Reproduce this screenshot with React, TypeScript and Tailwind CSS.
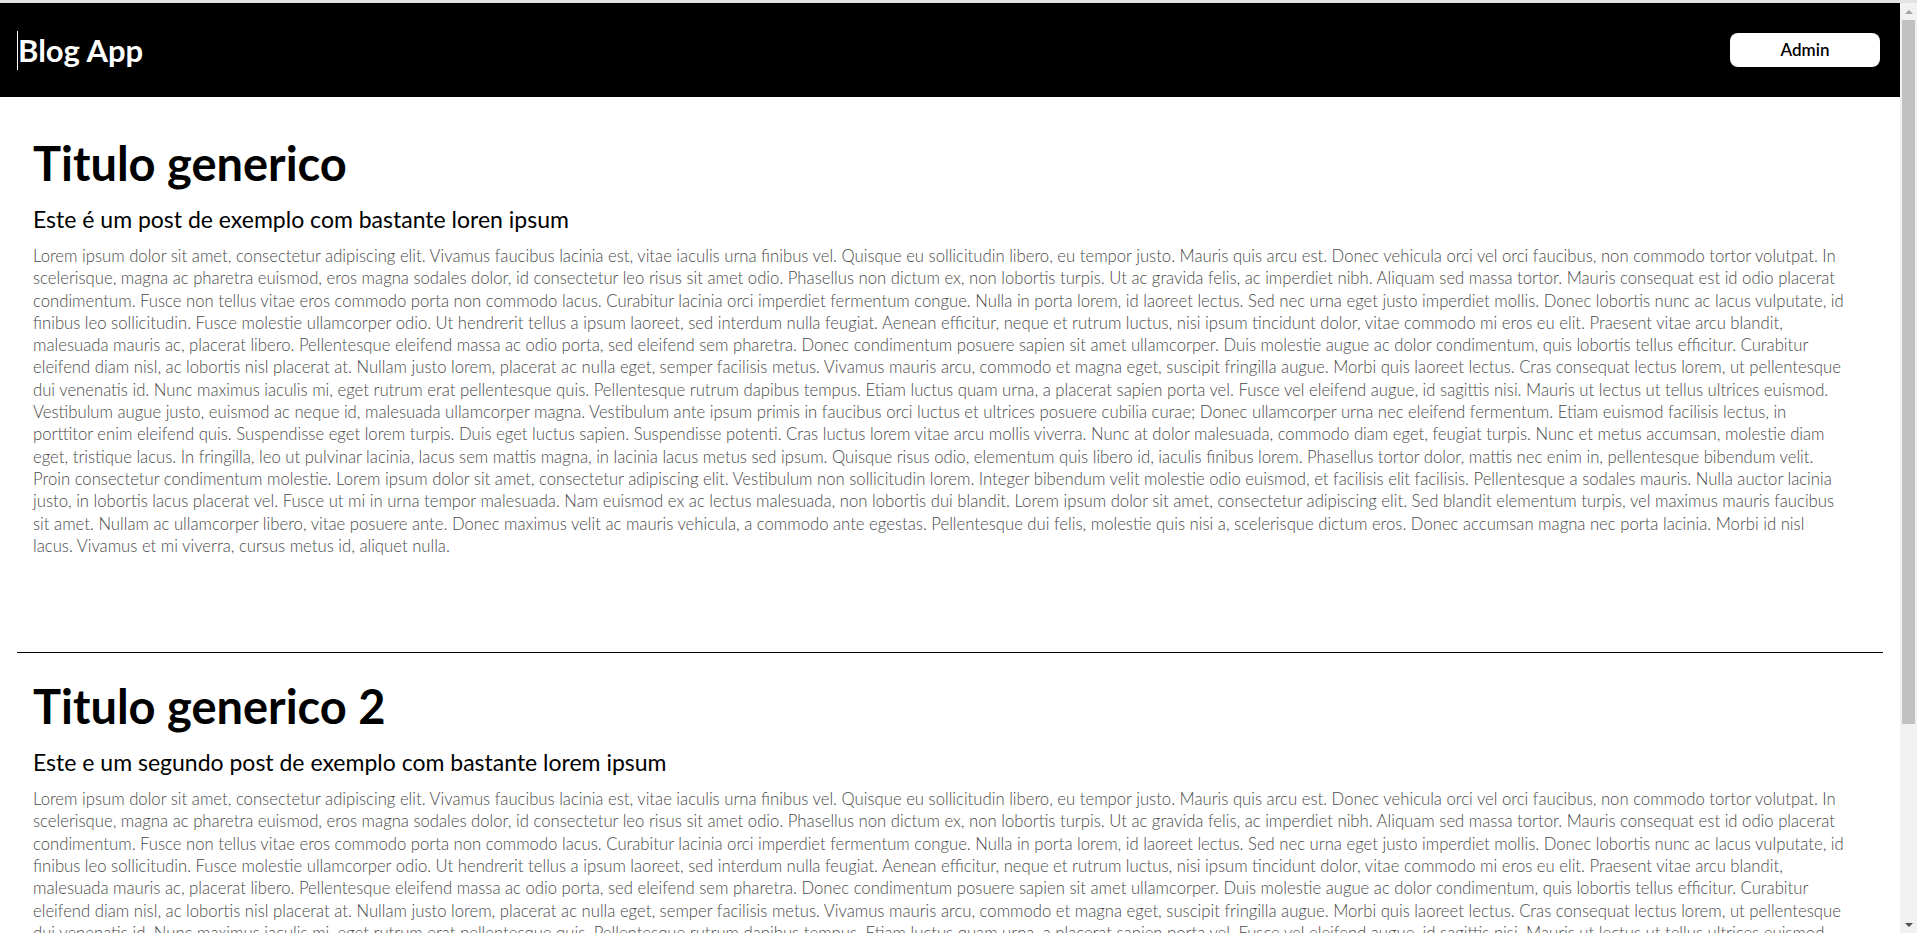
import { Fragment } from 'react';

// line breaks follow the reference render
const lorem = [
  'Lorem ipsum dolor sit amet, consectetur adipiscing elit. Vivamus faucibus lacinia est, vitae iaculis urna finibus vel. Quisque eu sollicitudin libero, eu tempor justo. Mauris quis arcu est. Donec vehicula orci vel orci faucibus, non commodo tortor volutpat. In',
  'scelerisque, magna ac pharetra euismod, eros magna sodales dolor, id consectetur leo risus sit amet odio. Phasellus non dictum ex, non lobortis turpis. Ut ac gravida felis, ac imperdiet nibh. Aliquam sed massa tortor. Mauris consequat est id odio placerat',
  'condimentum. Fusce non tellus vitae eros commodo porta non commodo lacus. Curabitur lacinia orci imperdiet fermentum congue. Nulla in porta lorem, id laoreet lectus. Sed nec urna eget justo imperdiet mollis. Donec lobortis nunc ac lacus vulputate, id',
  'finibus leo sollicitudin. Fusce molestie ullamcorper odio. Ut hendrerit tellus a ipsum laoreet, sed interdum nulla feugiat. Aenean efficitur, neque et rutrum luctus, nisi ipsum tincidunt dolor, vitae commodo mi eros eu elit. Praesent vitae arcu blandit,',
  'malesuada mauris ac, placerat libero. Pellentesque eleifend massa ac odio porta, sed eleifend sem pharetra. Donec condimentum posuere sapien sit amet ullamcorper. Duis molestie augue ac dolor condimentum, quis lobortis tellus efficitur. Curabitur',
  'eleifend diam nisl, ac lobortis nisl placerat at. Nullam justo lorem, placerat ac nulla eget, semper facilisis metus. Vivamus mauris arcu, commodo et magna eget, suscipit fringilla augue. Morbi quis laoreet lectus. Cras consequat lectus lorem, ut pellentesque',
  'dui venenatis id. Nunc maximus iaculis mi, eget rutrum erat pellentesque quis. Pellentesque rutrum dapibus tempus. Etiam luctus quam urna, a placerat sapien porta vel. Fusce vel eleifend augue, id sagittis nisi. Mauris ut lectus ut tellus ultrices euismod.',
  'Vestibulum augue justo, euismod ac neque id, malesuada ullamcorper magna. Vestibulum ante ipsum primis in faucibus orci luctus et ultrices posuere cubilia curae; Donec ullamcorper urna nec eleifend fermentum. Etiam euismod facilisis lectus, in',
  'porttitor enim eleifend quis. Suspendisse eget lorem turpis. Duis eget luctus sapien. Suspendisse potenti. Cras luctus lorem vitae arcu mollis viverra. Nunc at dolor malesuada, commodo diam eget, feugiat turpis. Nunc et metus accumsan, molestie diam',
  'eget, tristique lacus. In fringilla, leo ut pulvinar lacinia, lacus sem mattis magna, in lacinia lacus metus sed ipsum. Quisque risus odio, elementum quis libero id, iaculis finibus lorem. Phasellus tortor dolor, mattis nec enim in, pellentesque bibendum velit.',
  'Proin consectetur condimentum molestie. Lorem ipsum dolor sit amet, consectetur adipiscing elit. Vestibulum non sollicitudin lorem. Integer bibendum velit molestie odio euismod, et facilisis elit facilisis. Pellentesque a sodales mauris. Nulla auctor lacinia',
  'justo, in lobortis lacus placerat vel. Fusce ut mi in urna tempor malesuada. Nam euismod ex ac lectus malesuada, non lobortis dui blandit. Lorem ipsum dolor sit amet, consectetur adipiscing elit. Sed blandit elementum turpis, vel maximus mauris faucibus',
  'sit amet. Nullam ac ullamcorper libero, vitae posuere ante. Donec maximus velit ac mauris vehicula, a commodo ante egestas. Pellentesque dui felis, molestie quis nisi a, scelerisque dictum eros. Donec accumsan magna nec porta lacinia. Morbi id nisl',
  'lacus. Vivamus et mi viverra, cursus metus id, aliquet nulla.',
];

const posts = [
  { title: 'Titulo generico', subtitle: 'Este é um post de exemplo com bastante loren ipsum', body: lorem },
  { title: 'Titulo generico 2', subtitle: 'Este e um segundo post de exemplo com bastante lorem ipsum', body: lorem },
];

function Post({ title, subtitle, body }: { title: string; subtitle: string; body: string[] }) {
  return (
    <article className="px-[16px] pt-[29px] pb-[95px]">
      <h1 className="text-[47px] leading-[48px] font-bold text-black">{title}</h1>
      <h2 className="mt-[18px] text-[23px] leading-[28px] text-black">{subtitle}</h2>
      <p className="mt-[12px] text-[16.7px] leading-[22.3px] font-light text-[#4a4a4a]">
        {body.map((line, i) => (
          <Fragment key={i}>
            {line}
            {i < body.length - 1 && <br />}
          </Fragment>
        ))}
      </p>
    </article>
  );
}

export default function App() {
  return (
    <div className="h-[933px] overflow-hidden bg-white flex flex-col" style={{ fontFamily: 'Lato, "Liberation Sans", sans-serif' }}>
      <div className="h-[3px] bg-[#e3e3e3] shrink-0" />
      <div className="flex-1 flex min-h-0">
        <div className="flex-1 min-w-0 overflow-hidden">
          {/* Header */}
          <header className="h-[94px] bg-black flex items-center justify-between pl-[17px] pr-[20px]">
            <div className="flex items-center">
              <span className="w-px h-[39px] bg-white" />
              <span className="text-[31px] font-bold text-white">Blog App</span>
            </div>
            <button className="w-[150px] h-[34px] rounded-lg bg-white text-black text-[17px] font-semibold">
              Admin
            </button>
          </header>

          {/* Posts */}
          <main className="px-[17px] pt-[13px]">
            {posts.map((p, i) => (
              <div key={i} className={i > 0 ? 'border-t border-black' : ''}>
                <Post {...p} />
              </div>
            ))}
          </main>
        </div>

        {/* Scrollbar */}
        <div className="w-[17px] bg-[#f1f1f1] flex flex-col items-center shrink-0">
          <div className="h-[17px] flex items-center justify-center">
            <span className="w-0 h-0 border-x-[4px] border-x-transparent border-b-[4px] border-b-[#a3a3a3]" />
          </div>
          <div className="w-[13px] h-[704px] bg-[#c1c1c1]" />
          <div className="flex-1" />
          <div className="h-[17px] flex items-center justify-center">
            <span className="w-0 h-0 border-x-[4px] border-x-transparent border-t-[4px] border-t-[#505050]" />
          </div>
        </div>
      </div>
    </div>
  );
}
